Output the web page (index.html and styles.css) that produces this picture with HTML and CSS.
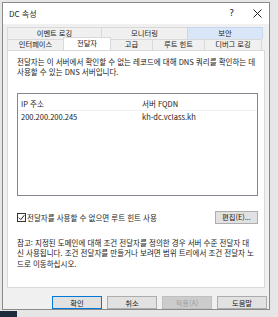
FILE: index.html
```html
<!DOCTYPE html>
<html lang="ko">
<head>
    <meta charset="UTF-8">
    <title>DC 속성</title>
    <link rel="stylesheet" href="styles.css">
</head>
<body>

<div class="window">
    <div class="titlebar">
        <span class="title">DC 속성</span>
        <span class="controls">
            <span class="help">?</span>
            <svg class="close" width="9" height="9" viewBox="0 0 9 9">
                <path d="M0.5 0.5 L8.5 8.5 M8.5 0.5 L0.5 8.5" stroke="#222" stroke-width="1"/>
            </svg>
        </span>
    </div>

    <div class="tabs">
        <div class="tab-row back">
            <div class="tab w-log">이벤트 로깅</div>
            <div class="tab w-mon">모니터링</div>
            <div class="tab w-sec hover">보안</div>
        </div>
        <div class="tab-row front">
            <div class="tab w-if">인터페이스</div>
            <div class="tab w-fwd active">전달자</div>
            <div class="tab w-adv">고급</div>
            <div class="tab w-root">루트 힌트</div>
            <div class="tab w-dbg">디버그 로깅</div>
        </div>
    </div>

    <div class="panel">
        <p class="intro">전달자는 이 서버에서 확인할 수 없는 레코드에 대해 DNS 쿼리를 확인하는 데 사용할 수 있는 DNS 서버입니다.</p>

        <div class="list">
            <div class="list-head">
                <span class="col-ip">IP 주소</span>
                <span class="col-fqdn">서버 FQDN</span>
            </div>
            <div class="list-row">
                <span class="col-ip">200.200.200.245</span>
                <span class="col-fqdn">kh-dc.vclass.kh</span>
            </div>
        </div>

        <div class="option">
            <label class="check">
                <span class="box">
                    <svg width="7" height="7" viewBox="0 0 7 7">
                        <path d="M0.8 3.6 L2.8 5.6 L6.3 1.2" stroke="#222" stroke-width="1" fill="none"/>
                    </svg>
                </span>
                전달자를 사용할 수 없으면 루트 힌트 사용
            </label>
            <button class="btn edit">편집(E)...</button>
        </div>

        <p class="note">참고: 지정된 도메인에 대해 조건 전달자를 정의한 경우 서버 수준 전달자 대신 사용됩니다. 조건 전달자를 만들거나 보려면 범위 트리에서 조건 전달자 노드로 이동하십시오.</p>
    </div>

    <div class="buttons">
        <button class="btn default">확인</button>
        <button class="btn">취소</button>
        <button class="btn" disabled>적용(A)</button>
        <button class="btn">도움말</button>
    </div>
</div>

<div class="taskbar-corner"></div>

</body>
</html>
```

FILE: styles.css
```css
body {
    margin: 0;
    width: 278px;
    height: 317px;
    background: #e6e6e6;
    font-family: "Noto Sans CJK KR", "Noto Sans", sans-serif;
    font-size: 7.5px;
    color: #1a1a1a;
    overflow: hidden;
    position: relative;
}
.window {
    margin: 2px 0 0 2px;
    width: 266px;
    height: 306px;
    border: 1px solid #8a8a8a;
    background: #f0f0f0;
    display: flex;
    flex-direction: column;
}
.titlebar {
    height: 21px;
    background: #fff;
    display: flex;
    align-items: center;
    justify-content: space-between;
    padding: 0 7px 0 6px;
    font-size: 8px;
}
.controls {
    display: flex;
    align-items: center;
    gap: 19px;
}
.help {
    font-family: "DejaVu Sans", sans-serif;
    font-size: 9px;
}
.tabs {
    margin: 3px 0 0 4px;
    width: 256px;
    font-size: 7.3px;
}
.tab-row {
    display: flex;
    height: 11px;
}
.tab-row.back {
    height: 12px;
}
.tab {
    box-sizing: border-box;
    border: 1px solid #d9d9d9;
    border-bottom: none;
    margin-right: -1px;
    background: #f0f0f0;
    display: flex;
    align-items: center;
    justify-content: center;
    line-height: 1;
}
.tab.hover {
    background: #d8e6f8;
    border-color: #c5d7ef;
}
.tab.active {
    background: #fff;
    height: 13px;
    margin-top: -2px;
    position: relative;
    z-index: 1;
}
.w-log { width: 95px; }
.w-mon { width: 87px; }
.w-sec { width: 76px; }
.w-if { width: 57px; }
.w-fwd { width: 48px; }
.w-adv { width: 43px; }
.w-root { width: 53px; }
.w-dbg { width: 58px; }
.panel {
    margin-left: 4px;
    width: 258px;
    height: 239px;
    box-sizing: border-box;
    background: #fff;
    border: 1px solid #d9d9d9;
    padding: 6px 6px 0 9px;
}
.intro, .note {
    margin: 0;
    line-height: 10.5px;
}
.list {
    margin: 15px 0 0 0;
    width: 241px;
    height: 103px;
    box-sizing: border-box;
    border: 1px solid #828790;
}
.list-head, .list-row {
    display: flex;
    height: 12px;
    align-items: center;
    padding-left: 3px;
}
.list-head {
    margin-top: 4px;
    border-bottom: 1px solid #f0f0f0;
}
.col-ip { width: 121px; }
.option {
    margin-top: 15px;
    width: 241px;
    display: flex;
    align-items: center;
    justify-content: space-between;
}
.check {
    display: flex;
    align-items: center;
    gap: 1px;
}
.box {
    width: 7px;
    height: 7px;
    border: 1px solid #333;
    display: flex;
}
.btn {
    font-family: inherit;
    font-size: 7.3px;
    color: #1a1a1a;
    background: #e1e1e1;
    border: 1px solid #adadad;
    width: 50px;
    height: 13px;
    padding: 0;
}
.btn.edit {
    width: 43px;
}
.btn.default {
    border-color: #0078d7;
}
.btn:disabled {
    color: #a0a0a0;
    background: #cccccc;
    border-color: #bfbfbf;
}
.note {
    margin: 14px 2px 0 0;
}
.buttons {
    display: flex;
    justify-content: flex-end;
    gap: 5px;
    padding: 8px 2px 0 0;
}
.taskbar-corner {
    position: absolute;
    left: 0;
    top: 311px;
    width: 17px;
    height: 6px;
    background: #1d2b3c;
}
```
